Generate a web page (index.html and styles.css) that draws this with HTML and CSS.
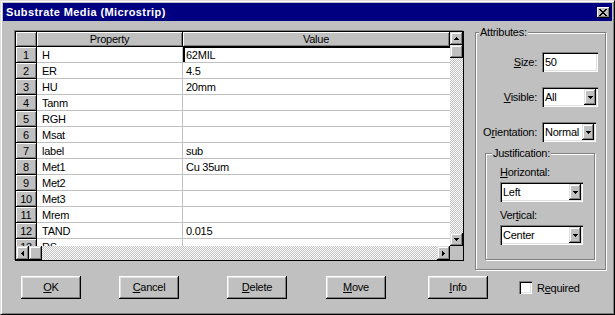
FILE: index.html
```html
<!DOCTYPE html>
<html lang="en">
<head>
    <meta charset="UTF-8">
    <title>Substrate Media (Microstrip)</title>
    <link rel="stylesheet" href="styles.css">
</head>
<body>
<div class="window">
    <div class="titlebar">
        <span class="title">Substrate Media (Microstrip)</span>
        <span class="close">
            <svg width="8" height="7" shape-rendering="crispEdges"><path d="M0 0h2v1H0zM6 0h2v1H6zM1 1h2v1H1zM5 1h2v1H5zM2 2h4v1H2zM3 3h2v1H3zM2 4h4v1H2zM1 5h2v1H1zM5 5h2v1H5zM0 6h2v1H0zM6 6h2v1H6z"/></svg>
        </span>
    </div>

    <div class="main">
        <div class="grid">
            <div class="cells">
                <div class="hcell"></div>
                <div class="hcell">Property</div>
                <div class="hcell">Value</div>

                <div class="rnum">1</div><div class="cell">H</div><div class="cell val edit">62MIL</div>
                <div class="rnum">2</div><div class="cell">ER</div><div class="cell val">4.5</div>
                <div class="rnum">3</div><div class="cell">HU</div><div class="cell val">20mm</div>
                <div class="rnum">4</div><div class="cell">Tanm</div><div class="cell val"></div>
                <div class="rnum">5</div><div class="cell">RGH</div><div class="cell val"></div>
                <div class="rnum">6</div><div class="cell">Msat</div><div class="cell val"></div>
                <div class="rnum">7</div><div class="cell">label</div><div class="cell val">sub</div>
                <div class="rnum">8</div><div class="cell">Met1</div><div class="cell val">Cu 35um</div>
                <div class="rnum">9</div><div class="cell">Met2</div><div class="cell val"></div>
                <div class="rnum">10</div><div class="cell">Met3</div><div class="cell val"></div>
                <div class="rnum">11</div><div class="cell">Mrem</div><div class="cell val"></div>
                <div class="rnum">12</div><div class="cell">TAND</div><div class="cell val">0.015</div>
                <div class="rnum">13</div><div class="cell">RS</div><div class="cell val"></div>
            </div>
            <div class="vscroll">
                <div class="sbtn"><svg width="5" height="3" shape-rendering="crispEdges"><path d="M2 0h1v1H2zM1 1h3v1H1zM0 2h5v1H0z"/></svg></div>
                <div class="sbtn"></div>
                <div class="track"></div>
                <div class="sbtn"><svg width="5" height="3" shape-rendering="crispEdges"><path d="M0 0h5v1H0zM1 1h3v1H1zM2 2h1v1H2z"/></svg></div>
            </div>
            <div class="hscroll">
                <div class="sbtn"><svg width="3" height="5" shape-rendering="crispEdges"><path d="M2 0h1v5H2zM1 1h1v3H1zM0 2h1v1H0z"/></svg></div>
                <div class="sbtn"></div>
                <div class="track"></div>
                <div class="sbtn"><svg width="3" height="5" shape-rendering="crispEdges"><path d="M0 0h1v5H0zM1 1h1v3H1zM2 2h1v1H2z"/></svg></div>
            </div>
            <div class="sizebox"></div>
        </div>

        <fieldset class="attrs">
            <legend>Attributes:</legend>
            <div class="attr-rows">
                <label><u>S</u>ize:</label>
                <div class="field w56">50</div>

                <label><u>V</u>isible:</label>
                <div class="combo w56"><span class="val">All</span><span class="drop"><svg width="5" height="3" shape-rendering="crispEdges"><path d="M0 0h5v1H0zM1 1h3v1H1zM2 2h1v1H2z"/></svg></span></div>

                <label>O<u>r</u>ientation:</label>
                <div class="combo w54"><span class="val">Normal</span><span class="drop"><svg width="5" height="3" shape-rendering="crispEdges"><path d="M0 0h5v1H0zM1 1h3v1H1zM2 2h1v1H2z"/></svg></span></div>
            </div>

            <fieldset class="just">
                <legend>Justification:</legend>
                <div class="just-body">
                    <label class="lbl"><u>H</u>orizontal:</label>
                    <div class="combo w83"><span class="val">Left</span><span class="drop"><svg width="5" height="3" shape-rendering="crispEdges"><path d="M0 0h5v1H0zM1 1h3v1H1zM2 2h1v1H2z"/></svg></span></div>
                    <label class="lbl second">Ver<u>t</u>ical:</label>
                    <div class="combo w83"><span class="val">Center</span><span class="drop"><svg width="5" height="3" shape-rendering="crispEdges"><path d="M0 0h5v1H0zM1 1h3v1H1zM2 2h1v1H2z"/></svg></span></div>
                </div>
            </fieldset>
        </fieldset>
    </div>

    <div class="buttons">
        <div class="btn"><u>O</u>K</div>
        <div class="btn b-cancel"><u>C</u>ancel</div>
        <div class="btn b-delete"><u>D</u>elete</div>
        <div class="btn b-move"><u>M</u>ove</div>
        <div class="btn b-info"><u>I</u>nfo</div>
        <div class="check">
            <span class="box"></span>
            <span>R<u>e</u>quired</span>
        </div>
    </div>
</div>
</body>
</html>
```

FILE: styles.css
```css
body {
    margin: 0;
    background-color: #c0c0c0;
    font-family: "Liberation Sans", Arial, sans-serif;
    font-size: 11px;
    letter-spacing: -0.25px;
    color: #000;
}
.window {
    width: 615px;
    height: 315px;
    box-sizing: border-box;
    background-color: #c0c0c0;
    border: 1px solid;
    border-color: #dfdfdf #000 #000 #dfdfdf;
    box-shadow: inset 1px 1px #fff, inset -1px -1px #808080;
    padding: 2px;
}

/* title bar */
.titlebar {
    height: 18px;
    background-color: #000080;
    color: #fff;
    display: flex;
    align-items: center;
    justify-content: space-between;
    padding: 0 2px 0 3px;
}
.title {
    font-weight: bold;
    letter-spacing: 0.4px;
}
.close {
    width: 13px;
    height: 11px;
    box-sizing: border-box;
    background-color: #c0c0c0;
    box-shadow: inset -1px -1px #000, inset 1px 1px #fff, inset -2px -2px #808080;
    display: flex;
    align-items: center;
    justify-content: center;
    padding-right: 1px;
}

/* raised pieces */
.sbtn, .hcell, .rnum, .drop, .btn {
    background-color: #c0c0c0;
}
.sbtn, .drop {
    box-sizing: border-box;
    box-shadow: inset -1px -1px #000, inset 1px 1px #dfdfdf, inset -2px -2px #808080, inset 2px 2px #fff;
    display: flex;
    align-items: center;
    justify-content: center;
}

.main {
    display: flex;
    align-items: flex-start;
    margin-top: 5px;
    padding-left: 11px;
}

/* property grid */
.grid {
    width: 449px;
    height: 230px;
    box-sizing: border-box;
    margin: 5px 0 0 1px;
    border: 1px solid #000;
    box-shadow: -1px -1px 0 #808080;
    display: grid;
    grid-template-columns: 434px 13px;
    grid-template-rows: 214px 14px;
}
.cells {
    display: grid;
    grid-template-columns: 21px 146px 267px;
    grid-template-rows: 15px;
    grid-auto-rows: 16px;
    overflow: hidden;
    background-color: #fff;
}
.hcell, .rnum {
    box-shadow: inset 1px 1px #fff, inset -1px -1px #808080;
    border-right: 1px solid #000;
    border-bottom: 1px solid #000;
    text-align: center;
}
.hcell {
    line-height: 14px;
}
.rnum {
    line-height: 16px;
}
.cell {
    border-right: 1px solid #c0c0c0;
    border-bottom: 1px solid #c0c0c0;
    padding-left: 5px;
    line-height: 16px;
    white-space: nowrap;
}
.cell.val {
    border-right: 0;
    padding-left: 3px;
}
.cell.edit {
    box-shadow: inset 2px 1px 0 #000;
}
.vscroll, .hscroll {
    display: flex;
    background-color: #fff;
    background-image: repeating-conic-gradient(#c0c0c0 0 25%, #fff 0 50%);
    background-size: 2px 2px;
}
.vscroll {
    flex-direction: column;
}
.vscroll .sbtn {
    height: 13px;
}
.hscroll .sbtn {
    width: 13px;
}
.track {
    flex: 1;
}
.sizebox {
    background-color: #c0c0c0;
}

/* attributes */
fieldset {
    margin: 0;
    padding: 0;
    min-width: 0;
    box-sizing: border-box;
    border: 1px solid #808080;
    box-shadow: inset 1px 1px #fff, 1px 1px #fff;
}
legend {
    padding: 0 1px;
    line-height: 13px;
    background-color: #c0c0c0;
}
.attrs {
    width: 131px;
    height: 244px;
    margin-left: 11px;
}
.attrs > legend {
    margin-left: 3px;
}
.attr-rows {
    display: grid;
    grid-template-columns: 61px auto;
    column-gap: 5px;
    row-gap: 15px;
    align-items: center;
    margin-top: 13px;
}
.attr-rows label {
    text-align: right;
}
.field, .combo {
    height: 20px;
    box-sizing: border-box;
    background-color: #fff;
    box-shadow: inset 1px 1px #808080, inset 2px 2px #000, inset -1px -1px #fff, inset -2px -2px #dfdfdf;
    padding: 2px;
    line-height: 16px;
}
.field {
    padding-left: 3px;
}
.combo {
    display: flex;
}
.combo .val {
    flex: 1;
    padding-left: 1px;
}
.drop {
    width: 12px;
    height: 16px;
}
.w56 { width: 56px; }
.w54 { width: 54px; }
.w83 { width: 83px; }

.just {
    width: 110px;
    height: 113px;
    margin: 5px 0 0 9px;
}
.just > legend {
    margin-left: 6px;
}
.just-body {
    padding: 6px 0 0 14px;
}
.lbl {
    display: block;
    line-height: 13px;
    margin-bottom: 3px;
}
.lbl.second {
    margin-top: 7px;
}

/* bottom buttons */
.buttons {
    display: flex;
    align-items: center;
    margin-top: 6px;
    padding-left: 18px;
}
.btn {
    width: 60px;
    height: 23px;
    box-sizing: border-box;
    box-shadow: inset -1px -1px #000, inset 1px 1px #fff, inset -2px -2px #808080, inset 2px 2px #dfdfdf;
    text-align: center;
    line-height: 22px;
}
.b-cancel { margin-left: 38px; }
.b-delete { margin-left: 48px; }
.b-move { margin-left: 39px; }
.b-info { margin-left: 42px; }
.check {
    display: flex;
    align-items: center;
    gap: 5px;
    margin-left: 31px;
}
.check .box {
    width: 13px;
    height: 13px;
    background-color: #fff;
    box-shadow: inset 1px 1px #808080, inset 2px 2px #000, inset -1px -1px #fff, inset -2px -2px #dfdfdf;
}
```
